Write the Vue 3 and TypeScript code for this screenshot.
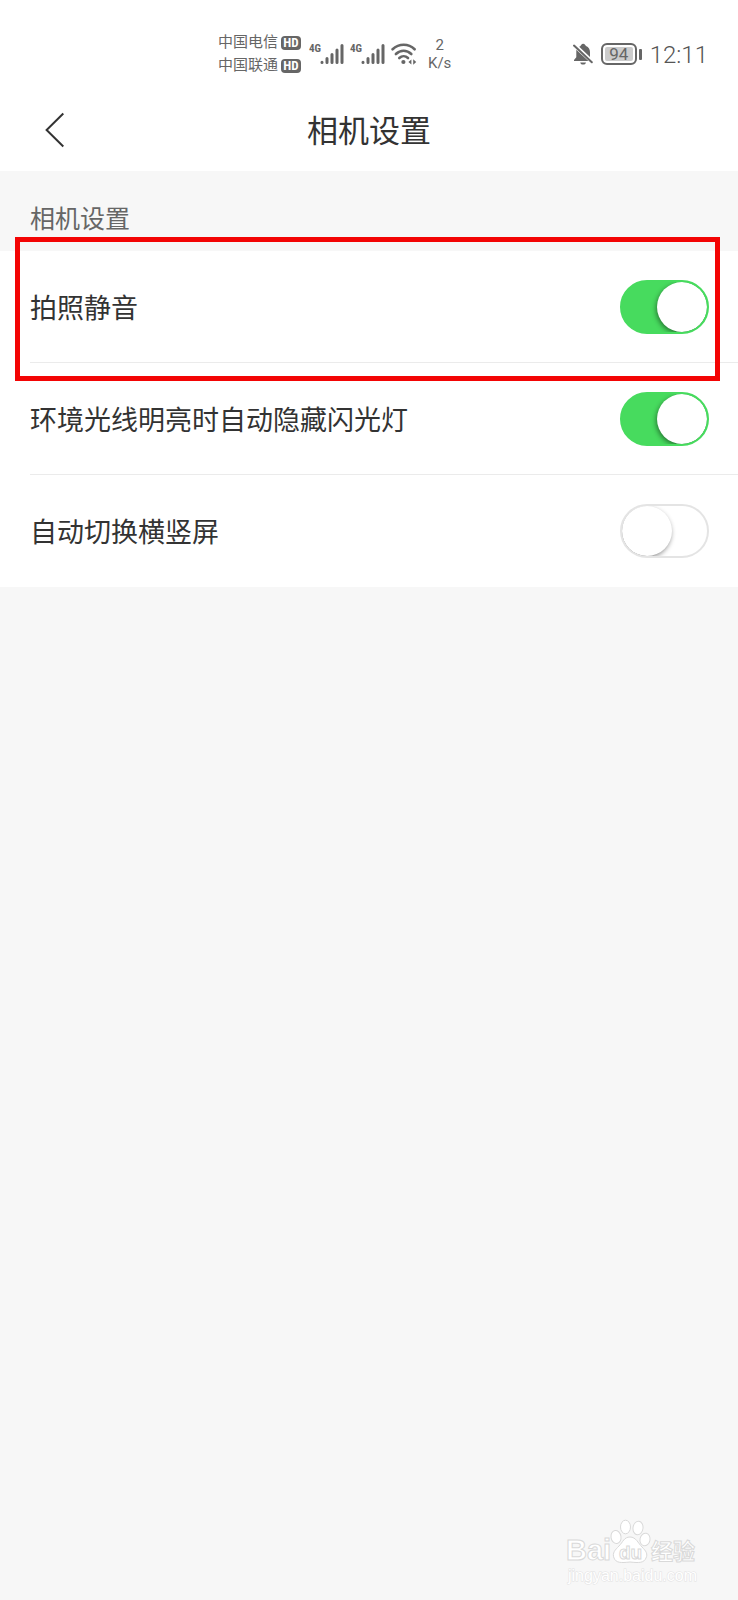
<script setup lang="ts">
import { reactive } from 'vue'

interface Setting {
  id: string
  label: string
  on: boolean
  marked: boolean
}

const carriers: string[] = ['中国电信', '中国联通']
const signals: number[] = [1, 2]

const settings = reactive<Setting[]>([
  { id: 'mute', label: '拍照静音', on: true, marked: true },
  { id: 'flash', label: '环境光线明亮时自动隐藏闪光灯', on: true, marked: false },
  { id: 'rotate', label: '自动切换横竖屏', on: false, marked: false },
])
</script>

<template>
  <div class="page">
    <div class="status">
      <div class="network">
        <div class="carriers">
          <div v-for="name in carriers" :key="name" class="carrier">
            <span>{{ name }}</span>
            <span class="hd">HD</span>
          </div>
        </div>
        <div v-for="n in signals" :key="n" class="signal">
          <span class="gen">4G</span>
          <svg class="bars" width="24" height="22" viewBox="0 0 24 22" aria-hidden="true">
            <g stroke="#666" stroke-width="3" stroke-linecap="round">
              <path d="M2 19.3V19.5M7 15.5V19.5M12 11.5V19.5M17 7V19.5M22 2.5V19.5" />
            </g>
          </svg>
        </div>
        <svg class="wifi" width="26" height="22" viewBox="0 0 26 22" aria-hidden="true">
          <g fill="none" stroke="#666" stroke-width="2.6" stroke-linecap="round">
            <path d="M1.6 6.3C8 .3 17.5 .3 23.6 6.3" />
            <path d="M4.9 11C9.4 6.7 15.8 6.7 20.3 11" />
            <path d="M8.3 15C10.9 12.6 14.4 12.6 17 15" />
          </g>
          <circle cx="12.4" cy="19" r="2.1" fill="#666" />
          <path d="M17.4 19L20.4 16.6V21.4ZM25.2 19L22.2 16.2V21.8Z" fill="#666" />
        </svg>
        <div class="speed">
          <span>2</span>
          <span>K/s</span>
        </div>
      </div>
      <div class="device">
        <svg width="20" height="22" viewBox="0 0 20 22" aria-hidden="true">
          <path d="M7.2 3.2C8.2 2.8 8.3 .8 10.2 .8S12.1 2.5 13 2.9C15.8 4.1 17 6.4 17 9.2V14L6.2 3.7ZM3.3 6.8L15.4 18H1V17L3.3 14.2Z" fill="#666" />
          <path d="M1 2.6L18.8 19.2" stroke="#666" stroke-width="2" stroke-linecap="round" />
          <path d="M7.2 19.4H13C12.5 21 11.5 21.6 10.1 21.6S7.7 21 7.2 19.4Z" fill="#666" />
        </svg>
        <div class="battery">
          <span class="level">94</span>
          <span class="tip"></span>
        </div>
        <time class="clock">12:11</time>
      </div>
    </div>

    <header class="header">
      <button class="back" type="button" aria-label="返回">
        <svg width="20" height="36" viewBox="0 0 20 36" aria-hidden="true">
          <path d="M18.3 1.5L1.6 18L18.3 34.5" fill="none" stroke="#333" stroke-width="2" />
        </svg>
      </button>
      <h1>相机设置</h1>
    </header>

    <main>
      <h2>相机设置</h2>
      <div class="list">
        <div v-for="item in settings" :key="item.id" class="row">
          <label :for="item.id">{{ item.label }}</label>
          <input :id="item.id" v-model="item.on" class="switch" type="checkbox" role="switch" />
          <div v-if="item.marked" class="mark"></div>
        </div>
      </div>
    </main>

    <footer class="watermark">
      <svg width="140" height="76" viewBox="0 0 140 76" role="img" aria-label="Baidu 经验">
        <g fill="#fff" stroke="#d9d9d9" stroke-width="1">
          <ellipse cx="54" cy="25" rx="5" ry="6.5" transform="rotate(-10 54 25)" />
          <ellipse cx="63.5" cy="15" rx="5" ry="6.8" />
          <ellipse cx="76" cy="16" rx="5" ry="6.8" transform="rotate(8 76 16)" />
          <ellipse cx="83" cy="27.5" rx="5" ry="6.3" transform="rotate(12 83 27.5)" />
          <path d="M68 25C74 25 76 31 80 35S86 42 84 46C82 51 77 51 68 50C59 51 54 51 52 46C50 41 53 38 57 34S62 25 68 25Z" />
          <text class="latin" x="4" y="48" font-size="29">Bai</text>
          <text class="latin" x="57" y="47" font-size="19">du</text>
          <text class="cjk" x="89" y="47" font-size="22">经验</text>
        </g>
        <text class="url" x="6" y="69" font-size="16">jingyan.baidu.com</text>
      </svg>
    </footer>
  </div>
</template>

<style>
body {
  margin: 0;
  background: #f7f7f7;
}
</style>

<style scoped>
.page {
  display: flex;
  flex-direction: column;
  min-height: 100vh;
  background: #f7f7f7;
  color: #333;
  font-family: Roboto, "Noto Sans CJK SC", sans-serif;
}

.status {
  display: flex;
  align-items: center;
  justify-content: space-between;
  box-sizing: border-box;
  height: 91px;
  padding: 17px 30px 0 218px;
  background: #fff;
  color: #666;
}

.network,
.device,
.carrier,
.signal {
  display: flex;
  align-items: center;
}

.carriers {
  margin-right: 8px;
}

.carrier {
  gap: 3px;
  height: 23px;
  font-size: 15px;
  line-height: 23px;
  white-space: nowrap;
}

.hd {
  width: 20px;
  height: 14px;
  border-radius: 4px;
  background: #666;
  color: #fff;
  font: bold 13px/14px "Roboto Condensed", "Liberation Sans Narrow", Roboto, sans-serif;
  text-align: center;
}

.signal {
  align-items: flex-start;
  margin-right: 6px;
}

.gen {
  width: 11px;
  font: bold 11px/11px "Roboto Condensed", "Liberation Sans Narrow", Roboto, sans-serif;
}

.speed {
  display: flex;
  flex-direction: column;
  align-items: center;
  margin-left: 11px;
  font-size: 15px;
  line-height: 18px;
}

.battery {
  display: flex;
  align-items: center;
  gap: 2px;
  margin-left: 8px;
}

.level {
  box-sizing: border-box;
  width: 36px;
  height: 22px;
  border: 2px solid #666;
  border-radius: 6px;
  background: #ccc;
  box-shadow: inset 0 0 0 2px #fff;
  font-size: 17px;
  line-height: 18px;
  text-align: center;
}

.tip {
  width: 3px;
  height: 11px;
  border-radius: 1px;
  background: #666;
}

.clock {
  margin-left: 8px;
  padding-top: 2px;
  color: #555;
  font-size: 24px;
  font-weight: 300;
  line-height: 28px;
}

.header {
  display: grid;
  grid-template-columns: 80px 1fr 80px;
  align-items: center;
  height: 80px;
  background: #fff;
}

.back {
  display: flex;
  justify-content: flex-start;
  padding: 0 0 2px 45px;
  border: 0;
  background: none;
}

h1 {
  margin: 0;
  padding-top: 2px;
  font-size: 31px;
  font-weight: 400;
  line-height: 40px;
  text-align: center;
}

h2 {
  margin: 0;
  padding: 31px 30px 13px;
  color: #666;
  font-size: 25px;
  font-weight: 400;
  line-height: 36px;
}

.list {
  background: #fff;
}

.row {
  position: relative;
  display: flex;
  align-items: center;
  justify-content: space-between;
  box-sizing: border-box;
  min-height: 112px;
  margin-left: 30px;
  padding-right: 29px;
  border-bottom: 1px solid #ebebeb;
}

.row:last-child {
  border-bottom-color: transparent;
}

label {
  padding-top: 5px;
  font-size: 27px;
  line-height: 40px;
}

.switch {
  flex: none;
  appearance: none;
  box-sizing: border-box;
  width: 89px;
  height: 54px;
  margin: 0;
  padding: 0;
  border: 2px solid #e4e4e4;
  border-radius: 27px;
  background: #fff;
  overflow: hidden;
}

.switch::before {
  display: block;
  width: 50px;
  height: 50px;
  border-radius: 50%;
  background: #fff;
  box-shadow: -1px 2px 5px rgba(0, 0, 0, 0.45);
  content: "";
}

.switch:checked {
  border-color: #47db5e;
  background: #47db5e;
}

.switch:checked::before {
  margin-left: auto;
}

.mark {
  position: absolute;
  inset: -14px 18px -19px -15px;
  border: 5px solid #f30404;
  pointer-events: none;
  z-index: 1;
}

.watermark {
  display: flex;
  justify-content: flex-end;
  margin-top: auto;
  padding: 0 36px 12px;
}

.latin {
  font-family: "Liberation Sans", sans-serif;
  font-weight: 700;
}

.cjk {
  font-family: "Noto Sans CJK SC", sans-serif;
  font-weight: 700;
}

.url {
  fill: #fff;
  stroke: #e2e2e2;
  stroke-width: 1px;
  paint-order: stroke;
  font-family: "Liberation Sans", sans-serif;
}
</style>
